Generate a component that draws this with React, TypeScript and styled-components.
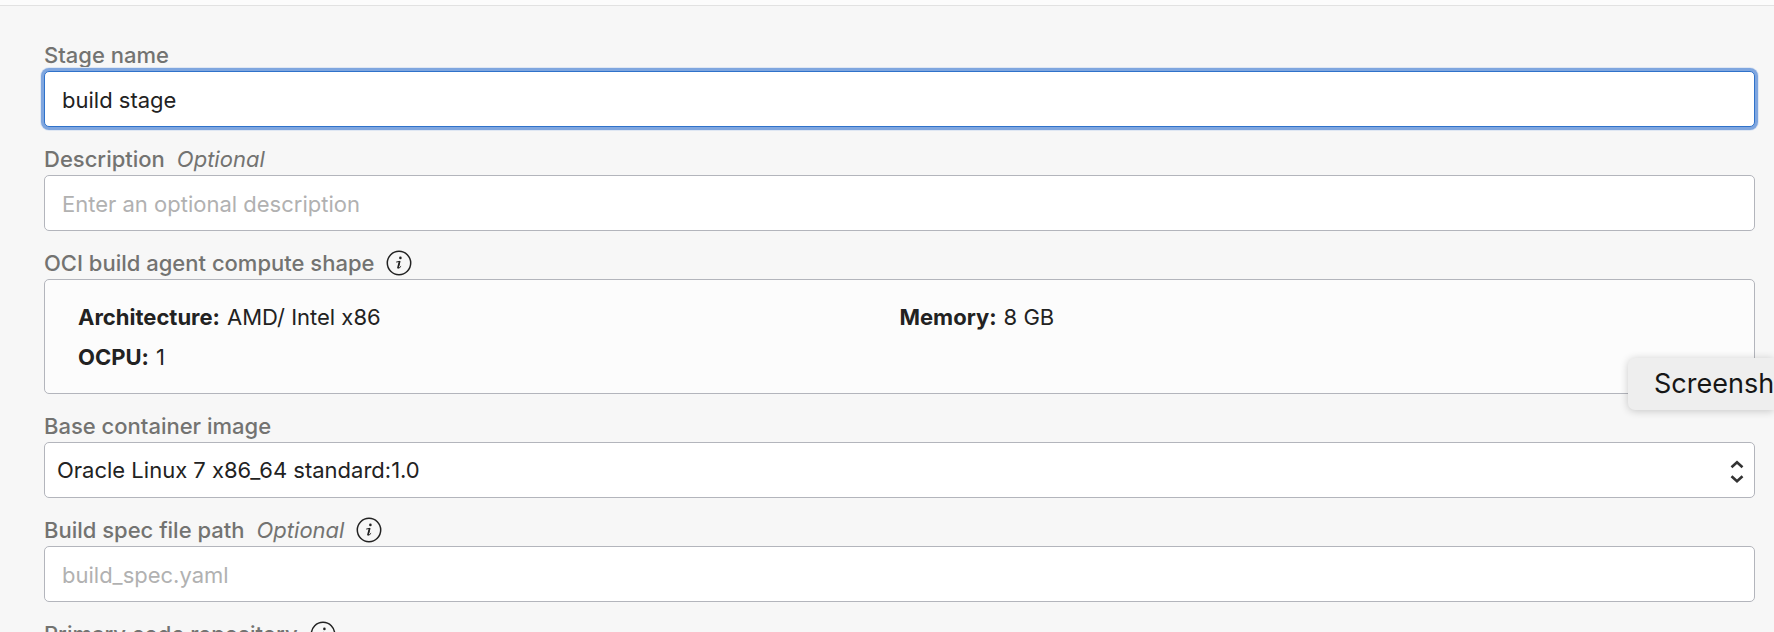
import React from 'react';
import styled, { createGlobalStyle, css } from 'styled-components';

const GlobalStyle = createGlobalStyle`
  *, *::before, *::after { box-sizing: border-box; }
  body {
    margin: 0;
    background: #f7f7f7;
    color: #222222;
    font-family: Inter, "Liberation Sans", sans-serif;
    font-size: 22px;
    line-height: 28px;
    font-variant-ligatures: no-contextual;
  }
`;

const Page = styled.div`
  display: flex;
  flex-direction: column;
  height: 100vh;
  overflow: hidden;
`;

const TopBar = styled.header`
  flex: none;
  height: 6px;
  background: #fcfcfc;
  border-bottom: 1px solid #e2e2e2;
`;

const Form = styled.form`
  display: flex;
  flex-direction: column;
  gap: 18px;
  padding: 35px 19px 0 44px;
`;

const Field = styled.div`
  flex: none;
  display: flex;
  flex-direction: column;
  gap: 2px;
`;

const LabelRow = styled.div`
  display: flex;
  align-items: center;
  height: 28px;
  gap: 12px;
  color: #737371;
`;

const Label = styled.label`
  font-weight: 500;
`;

const Optional = styled.span`
  font-style: italic;
`;

const InfoButton = styled.button`
  display: flex;
  padding: 0;
  border: 0;
  background: none;
  color: #222222;
`;

const frame = css`
  width: 100%;
  border: 1px solid #b3b5bc;
  border-radius: 5px;
`;

const control = css`
  ${frame}
  height: 56px;
  background: #ffffff;
  color: #222222;
  font: inherit;
  font-variant-ligatures: inherit;
`;

const TextInput = styled.input<{ $active?: boolean }>`
  ${control}
  padding: 1px 17px 0;
  outline: none;

  &::placeholder {
    color: #b1b1b1;
    opacity: 1;
  }

  ${({ $active }) =>
    $active &&
    css`
      border-color: #2f72ca;
      box-shadow: 0 0 0 3px #7fa6df, 0 0 0 4px #dfe7f3;
    `}
`;

const SelectWrap = styled.div`
  position: relative;
`;

const Select = styled.select`
  ${control}
  display: block;
  padding: 0 40px 0 12px;
  appearance: none;
`;

const SelectArrows = styled.svg`
  position: absolute;
  top: 18px;
  right: 10px;
  pointer-events: none;
`;

const ShapeCard = styled.dl`
  ${frame}
  display: grid;
  grid-template-columns: 1fr 1fr;
  grid-auto-rows: 40px;
  align-items: center;
  margin: 0;
  padding: 17px 33px 16px;
  background: #fcfcfc;
`;

const Spec = styled.div`
  display: flex;
  gap: 7px;

  dt { font-weight: 700; }
  dd { margin: 0; }
`;

const Tooltip = styled.div`
  position: absolute;
  top: 358px;
  right: 0;
  width: 146px;
  height: 52px;
  padding-left: 26px;
  overflow: hidden;
  border-radius: 7px 0 0 7px;
  background: #eeeeee;
  box-shadow: 0 1px 8px rgba(0, 0, 0, 0.2);
  color: #161616;
  font-size: 27px;
  line-height: 52px;
  white-space: nowrap;
`;

const Info = ({ about }: { about: string }) => (
  <InfoButton type="button" aria-label={`About ${about}`}>
    <svg width="26" height="26" viewBox="0 0 26 26" fill="none" stroke="currentColor">
      <circle cx="13" cy="13" r="11.7" strokeWidth="1.5" />
      <circle cx="14.4" cy="7.9" r="1.3" fill="currentColor" stroke="none" />
      <path
        d="M10.6 12 L13.9 11.3 L12.3 17.3 Q12.1 18.6 13.1 18 L14.8 16.5"
        strokeWidth="1"
        strokeLinecap="round"
      />
      <path d="M13.5 11.8 L12 17.6" strokeWidth="1.7" strokeLinecap="round" />
    </svg>
  </InfoButton>
);

interface FieldHeadProps {
  id: string;
  text: string;
  optional?: boolean;
  info?: boolean;
}

const FieldHead = ({ id, text, optional, info }: FieldHeadProps) => (
  <LabelRow>
    <Label htmlFor={id}>{text}</Label>
    {optional && <Optional>Optional</Optional>}
    {info && <Info about={text} />}
  </LabelRow>
);

const specs = [
  ['Architecture:', 'AMD/ Intel x86'],
  ['Memory:', '8 GB'],
  ['OCPU:', '1'],
];

export default function App() {
  return (
    <Page>
      <GlobalStyle />
      <TopBar />
      <Form>
        <Field>
          <FieldHead id="stage" text="Stage name" />
          <TextInput id="stage" defaultValue="build stage" $active />
        </Field>
        <Field>
          <FieldHead id="description" text="Description" optional />
          <TextInput id="description" placeholder="Enter an optional description" />
        </Field>
        <Field>
          <LabelRow>
            <Label as="span" id="shape">OCI build agent compute shape</Label>
            <Info about="compute shape" />
          </LabelRow>
          <ShapeCard aria-labelledby="shape">
            {specs.map(([name, value]) => (
              <Spec key={name}>
                <dt>{name}</dt>
                <dd>{value}</dd>
              </Spec>
            ))}
          </ShapeCard>
        </Field>
        <Field>
          <FieldHead id="image" text="Base container image" />
          <SelectWrap>
            <Select id="image">
              <option>Oracle Linux 7 x86_64 standard:1.0</option>
            </Select>
            <SelectArrows width="16" height="24" viewBox="0 0 16 24" fill="none" stroke="#333333" strokeWidth="2.6">
              <path d="M2.5 7.2 L8 2.2 L13.5 7.2" />
              <path d="M2.5 16.2 L8 21.2 L13.5 16.2" />
            </SelectArrows>
          </SelectWrap>
        </Field>
        <Field>
          <FieldHead id="spec" text="Build spec file path" optional info />
          <TextInput id="spec" placeholder="build_spec.yaml" />
        </Field>
        <Field>
          <FieldHead id="repository" text="Primary code repository" info />
          <TextInput id="repository" />
        </Field>
      </Form>
      <Tooltip role="tooltip">Screensh</Tooltip>
    </Page>
  );
}
